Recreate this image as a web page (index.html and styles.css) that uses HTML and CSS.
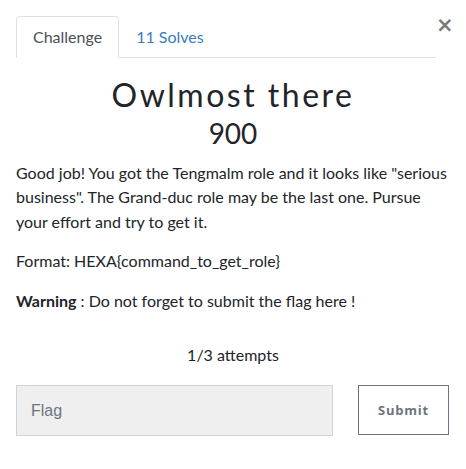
FILE: index.html
```html
<!DOCTYPE html>
<html>
<head>
<meta charset="utf-8">
<link rel="stylesheet" href="styles.css">
</head>
<body>
<div class="modal">
  <div class="header">
    <ul class="tabs">
      <li class="tab active">Challenge</li>
      <li class="tab link">11 Solves</li>
    </ul>
    <span class="close">&times;</span>
  </div>
  <h2 class="title">Owlmost there</h2>
  <h3 class="points">900</h3>
  <div class="desc">
    <p>Good job! You got the Tengmalm role and it looks like "serious business". The Grand-duc role may be the last one. Pursue your effort and try to get it.</p>
    <p>Format: HEXA{command_to_get_role}</p>
    <p><strong>Warning</strong> : Do not forget to submit the flag here !</p>
  </div>
  <p class="attempts">1/3 attempts</p>
  <div class="submit-row">
    <input class="flag" type="text" placeholder="Flag">
    <button class="submit">Submit</button>
  </div>
</div>
</body>
</html>
```
FILE: styles.css
```css
html, body { margin: 0; padding: 0; background: #fff; }
body { font-family: Lato, "Open Sans", sans-serif; color: #212529; font-size: 16px; line-height: 1.5; }
.modal { padding: 16px 16px 0 16px; }
.header { display: flex; align-items: flex-start; }
.tabs { list-style: none; margin: 0; padding: 0; display: flex; flex: 0 0 420px; border-bottom: 1px solid #dee2e6; }
.tab { padding: 8px 16px; margin-bottom: -1px; border: 1px solid transparent; border-radius: 4px 4px 0 0; }
.tab.active { border-color: #dee2e6 #dee2e6 #fff; color: #495057; }
.tab.link { color: #3a7bbf; }
.close { margin-left: auto; margin-right: 4px; margin-top: -1px; font-family: "DejaVu Sans", sans-serif; font-size: 21px; font-weight: bold; color: #7a7a7a; line-height: 1; }
.title { font-family: Lato, sans-serif; font-weight: 400; font-size: 32px; letter-spacing: 2.5px; text-align: center; margin: 18px 0 0; line-height: 1.2; color: #212529; }
.points { font-family: Lato, sans-serif; font-weight: 400; font-size: 28px; text-align: center; margin: 3px 0 0; line-height: 1.2; }
.desc { margin-top: 10px; line-height: 24.5px; }
.desc p { margin: 0 0 15px; }
.attempts { text-align: center; margin: 30px 0 18px; }
.submit-row { display: grid; grid-template-columns: 317px 91px; column-gap: 25px; }
.flag { height: 51px; box-sizing: border-box; background: #efefef; border: 1px solid #ced4da; font-family: "Liberation Sans", Arial, sans-serif; font-size: 16px; padding: 0 14px; color: #495057; }
.flag::placeholder { color: #6c757d; }
.submit { height: 50px; box-sizing: border-box; background: #fff; border: 1px solid #6c757d; color: #6c757d; font-family: "Open Sans", sans-serif; font-weight: 700; font-size: 13px; letter-spacing: 0.8px; }
```
